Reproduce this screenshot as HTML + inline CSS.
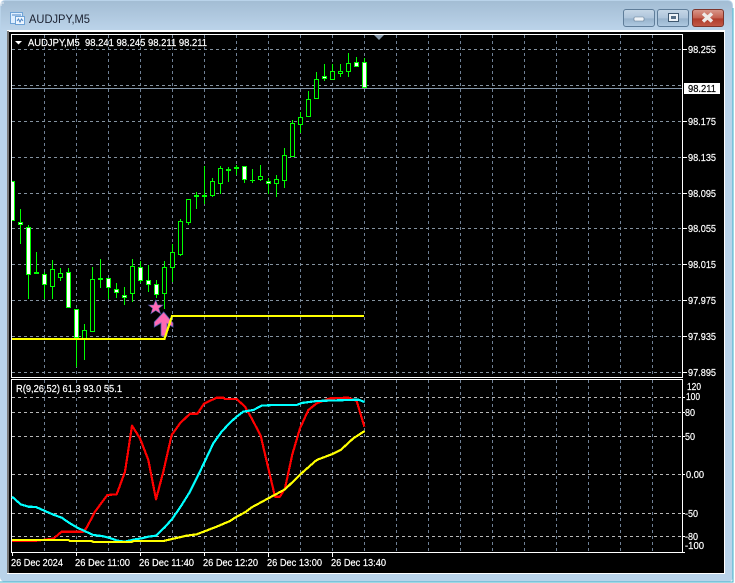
<!DOCTYPE html>
<html><head><meta charset="utf-8"><style>
html,body{margin:0;padding:0;width:735px;height:583px;overflow:hidden;background:#fff}
svg{display:block;position:absolute;left:0;top:0}
text{font-family:"Liberation Sans",sans-serif;font-size:10px;color:#fff;fill:currentColor;stroke:currentColor;stroke-width:.2}
.h rect{fill:#000;stroke:#0f0;stroke-width:1}
.w rect{fill:#fff;stroke:#0f0;stroke-width:1}
.wick{stroke:#0f0;stroke-width:1;fill:none}
.l{fill:none;stroke-width:6.600;stroke-linejoin:round;shape-rendering:crispEdges}
</style></head><body>
<svg width="735" height="583" viewBox="0 0 735 583" xmlns="http://www.w3.org/2000/svg">
<defs>
<linearGradient id="tb" x1="0" y1="0" x2="0" y2="1"><stop offset="0" stop-color="#a3bdd4"/><stop offset="1" stop-color="#bcd4ea"/></linearGradient>
<linearGradient id="b1" x1="0" y1="0" x2="0" y2="1"><stop offset="0" stop-color="#c6d7e7"/><stop offset=".5" stop-color="#aec5db"/><stop offset=".55" stop-color="#98b3cc"/><stop offset="1" stop-color="#b0cae2"/></linearGradient>
<linearGradient id="b2" x1="0" y1="0" x2="0" y2="1"><stop offset="0" stop-color="#d9998c"/><stop offset=".5" stop-color="#c4604f"/><stop offset=".55" stop-color="#b03c2b"/><stop offset="1" stop-color="#c25a48"/></linearGradient>
</defs>
<rect x="0" y="0" width="735" height="583" fill="#fff"/>
<rect x="0" y="0" width="733" height="582" rx="5" fill="#b9d3ea"/>
<rect x="1" y="1" width="731" height="30" rx="4" fill="url(#tb)"/>
<path d="M1 6V3H4" stroke="#e8eef4" fill="none"/>
<path d="M0 582H733V8" stroke="#3fb2c9" fill="none"/>
<rect x="7" y="30" width="718" height="544" fill="#fff"/>
<rect x="7" y="31" width="2" height="542" fill="#777"/>
<rect x="9" y="32" width="715" height="541" fill="#000"/>

<!-- title icon -->
<rect x="10.500" y="12.500" width="12" height="11" fill="#dfefff" stroke="#6fa3d6"/>
<rect x="15.500" y="16.500" width="9" height="8" fill="#eef6ff" stroke="#6fa3d6"/>
<path d="M12 15h9M17 21l1.500-2 1.500 3 1.500-3 1.500 2" stroke="#4f87c4" fill="none"/>
<text x="29" y="23" textLength="61" lengthAdjust="spacingAndGlyphs" style="font-size:11.500px;color:#1a2030;stroke-width:0">AUDJPY,M5</text>

<!-- buttons -->
<rect x="623.500" y="9.500" width="31" height="17" rx="2.500" fill="url(#b1)" stroke="#5f7d99"/>
<rect x="634" y="17" width="10" height="4" rx="1" fill="#eef3f8" stroke="#607a92" stroke-width=".6"/>
<rect x="657.500" y="9.500" width="31" height="17" rx="2.500" fill="url(#b1)" stroke="#5f7d99"/>
<rect x="668.500" y="13.500" width="10" height="8" fill="#eef3f8" stroke="#3f5870"/>
<rect x="671" y="16" width="5" height="3" fill="#566e86"/>
<rect x="692.500" y="9.500" width="31" height="17" rx="2.500" fill="url(#b2)" stroke="#7d352c"/>
<path d="M703 13.500l9 8M712 13.500l-9 8" stroke="#eeeae8" stroke-width="3.500"/>

<!-- grids -->
<g shape-rendering="crispEdges" stroke="#6f8095" stroke-dasharray="3 3" fill="none">
<path d="M44.500 35V377M76.500 35V377M108.500 35V377M140.500 35V377M172.500 35V377M204.500 35V377M236.500 35V377M268.500 35V377M300.500 35V377M332.500 35V377M364.500 35V377M396.500 35V377M428.500 35V377M460.500 35V377M492.500 35V377M524.500 35V377M556.500 35V377M588.500 35V377M620.500 35V377M652.500 35V377"/>
<path d="M44.500 380V552M76.500 380V552M108.500 380V552M140.500 380V552M172.500 380V552M204.500 380V552M236.500 380V552M268.500 380V552M300.500 380V552M332.500 380V552M364.500 380V552M396.500 380V552M428.500 380V552M460.500 380V552M492.500 380V552M524.500 380V552M556.500 380V552M588.500 380V552M620.500 380V552M652.500 380V552"/>
<path stroke="#84929f" d="M12 49.500H683M12 85.500H683M12 121.500H683M12 157.500H683M12 193.500H683M12 228.500H683M12 264.500H683M12 300.500H683M12 336.500H683M12 372.500H683"/>
<path stroke="#b8b8b8" d="M12 397.500H683M12 412.500H683M12 436.500H683M12 474.500H683M12 513.500H683M12 536.500H683"/>
</g>
<rect x="12" y="88" width="671" height="1" fill="#8496a8"/>

<!-- candles wicks -->
<path class="wick" shape-rendering="crispEdges" d="M20.500 209V244M28.500 225V299M36.500 252V274M44.500 272V299M52.500 260V299M60.500 268V281M68.500 268V308M76.500 309V367M84.500 324V360M92.500 267V332M100.500 259V288M108.500 278V299M116.500 283V298M124.500 287V305M132.500 259V302M140.500 261V283M148.500 265V292M156.500 280V298M164.500 261V309M172.500 244V282M180.500 219V256M188.500 199V225M196.500 192V209M204.500 166V204M212.500 178V197M220.500 166V194M228.500 167V182M236.500 165V175M244.500 166V183M252.500 169V183M260.500 165V181M268.500 178V194M276.500 175V197M284.500 148V188M292.500 120V157M300.500 112V133M308.500 91V117M316.500 72V99M324.500 64V81M332.500 64V80M340.500 64V77M348.500 53V77M356.500 57V67M364.500 58V88"/>
<g class="h" shape-rendering="crispEdges">
<rect x="50.500" y="269.500" width="4" height="17"/><rect x="58.500" y="273.500" width="4" height="4"/><rect x="82.500" y="330.500" width="4" height="9"/><rect x="90.500" y="279.500" width="4" height="52"/><rect x="130.500" y="266.500" width="4" height="27"/><rect x="162.500" y="267.500" width="4" height="26"/><rect x="170.500" y="252.500" width="4" height="15"/><rect x="178.500" y="221.500" width="4" height="33"/><rect x="186.500" y="199.500" width="4" height="23"/><rect x="210.500" y="181.500" width="4" height="14"/><rect x="218.500" y="168.500" width="4" height="15"/><rect x="258.500" y="176.500" width="4" height="3"/><rect x="274.500" y="179.500" width="4" height="4"/><rect x="282.500" y="155.500" width="4" height="25"/><rect x="290.500" y="123.500" width="4" height="33"/><rect x="298.500" y="117.500" width="4" height="7"/><rect x="306.500" y="99.500" width="4" height="17"/><rect x="314.500" y="79.500" width="4" height="19"/><rect x="330.500" y="71.500" width="4" height="8"/><rect x="338.500" y="71.500" width="4" height="2"/><rect x="346.500" y="63.500" width="4" height="8"/>
</g>
<g shape-rendering="crispEdges" fill="#0f0">
<rect x="34" y="272" width="5" height="2"/><rect x="98" y="278" width="5" height="2"/><rect x="194" y="195" width="5" height="2"/><rect x="202" y="195" width="5" height="2"/><rect x="226" y="169" width="5" height="2"/><rect x="234" y="167" width="5" height="2"/><rect x="250" y="180" width="5" height="1"/>
</g>
<g class="w" shape-rendering="crispEdges">
<rect x="11.500" y="181.500" width="3" height="39"/><rect x="18.500" y="222.500" width="4" height="2"/><rect x="26.500" y="227.500" width="4" height="47"/><rect x="42.500" y="274.500" width="4" height="10"/><rect x="66.500" y="272.500" width="4" height="35"/><rect x="74.500" y="309.500" width="4" height="28"/><rect x="106.500" y="278.500" width="4" height="9"/><rect x="114.500" y="289.500" width="4" height="3"/><rect x="122.500" y="295.500" width="4" height="2"/><rect x="138.500" y="267.500" width="4" height="13"/><rect x="146.500" y="280.500" width="4" height="4"/><rect x="154.500" y="284.500" width="4" height="10"/><rect x="242.500" y="166.500" width="4" height="13"/><rect x="266.500" y="181.500" width="4" height="2"/><rect x="322.500" y="76.500" width="4" height="2"/><rect x="354.500" y="62.500" width="4" height="4"/><rect x="362.500" y="62.500" width="4" height="25"/>
</g>

<!-- star + arrow -->
<path d="M155.700 300l2 5h5.300l-4.200 3.300 1.700 5.400-4.800-3.200-4.800 3.200 1.700-5.400-4.200-3.300h5.300z" fill="#ff69b4" stroke="#5560b0" stroke-width=".6"/>
<path d="M163.700 312L173 323v4l-6-3.500V336h-6V323l-6.700 4V322z" fill="#ff69b4" stroke="#5560b0" stroke-width=".8"/>

<!-- main yellow -->
<path d="M12 339H164.500L172 316H364" fill="none" stroke="#ff0" stroke-width="2.200" shape-rendering="crispEdges"/>

<!-- borders -->
<g fill="#fff" shape-rendering="crispEdges">
<rect x="11" y="34" width="672" height="1"/><rect x="11" y="34" width="1" height="344"/><rect x="682" y="34" width="1" height="344"/><rect x="11" y="377" width="672" height="1"/>
<rect x="11" y="379" width="672" height="1"/><rect x="11" y="379" width="1" height="174"/><rect x="682" y="379" width="1" height="174"/><rect x="11" y="552" width="672" height="1"/>
<path d="M683 49h4v1h-4zM683 121h4v1h-4zM683 157h4v1h-4zM683 193h4v1h-4zM683 228h4v1h-4zM683 264h4v1h-4zM683 300h4v1h-4zM683 336h4v1h-4zM683 372h4v1h-4zM683 397h2v1h-2zM683 412h2v1h-2zM683 436h2v1h-2zM683 474h2v1h-2zM683 513h2v1h-2zM683 536h2v1h-2zM683 552h2v1h-2z"/>
<path d="M12 553h1v3h-1zM76 553h1v3h-1zM140 553h1v3h-1zM204 553h1v3h-1zM268 553h1v4h-1zM332 553h1v4h-1z"/>
</g>
<path d="M374 35h10l-5 5z" fill="#8496a8"/>
<path d="M15 41h7l-3.500 3.500z" fill="#fff"/>

<!-- indicators -->
<g transform="translate(0 375) scale(.33333)">
<polyline class="l" stroke="#f00" points="36,497 110,497 160,491 185,470 250,470 260,458 285,410 322,360 350,358 375,290 396,152 420,190 445,255 468,373 490,290 515,180 540,145 570,116 592,116 612,86 650,68 670,68 675,72 710,72 735,95 755,130 782,182 825,365 840,365 855,340 877,238 900,160 925,105 950,85 990,70 1045,68 1070,78 1093,155"/>
<polyline class="l" stroke="#0ff" points="36,365 62,388 85,395 108,396 135,408 160,419 185,428 210,445 232,458 258,470 280,480 305,483 330,489 352,497 375,500 400,494 425,490 445,485 468,482 495,456 518,430 545,390 570,350 590,310 615,258 640,205 665,170 690,143 710,125 730,110 760,105 785,92 820,90 890,90 905,84 950,78 1045,75 1075,74 1094,81"/>
<polyline class="l" stroke="#ff0" points="36,495 205,495 210,498 275,498 280,501 395,501 400,498 490,498 525,490 560,482 590,478 650,455 690,438 710,425 735,412 755,397 805,370 855,343 910,290 950,255 995,238 1022,225 1060,190 1094,168"/>
</g>

<!-- texts -->
<g>
<text x="28" y="46" textLength="179" lengthAdjust="spacingAndGlyphs" xml:space="preserve">AUDJPY,M5  98.241 98.245 98.211 98.211</text>
<text x="16" y="392" textLength="106" lengthAdjust="spacingAndGlyphs">R(9,26,52) 61.3 93.0 55.1</text>
<text x="688" y="53" textLength="28" lengthAdjust="spacingAndGlyphs">98.255</text>
<rect x="684" y="83" width="36" height="11" fill="#fff"/>
<text x="688" y="92" textLength="28" lengthAdjust="spacingAndGlyphs" style="color:#000">98.211</text>
<text x="688" y="125" textLength="28" lengthAdjust="spacingAndGlyphs">98.175</text>
<text x="688" y="161" textLength="28" lengthAdjust="spacingAndGlyphs">98.135</text>
<text x="688" y="197" textLength="28" lengthAdjust="spacingAndGlyphs">98.095</text>
<text x="688" y="232" textLength="28" lengthAdjust="spacingAndGlyphs">98.055</text>
<text x="688" y="268" textLength="28" lengthAdjust="spacingAndGlyphs">98.015</text>
<text x="688" y="304" textLength="28" lengthAdjust="spacingAndGlyphs">97.975</text>
<text x="688" y="340" textLength="28" lengthAdjust="spacingAndGlyphs">97.935</text>
<text x="688" y="376" textLength="28" lengthAdjust="spacingAndGlyphs">97.895</text>
<text x="687" y="390" textLength="14" lengthAdjust="spacingAndGlyphs">120</text>
<text x="686" y="400" textLength="14" lengthAdjust="spacingAndGlyphs">100</text>
<text x="685" y="416" textLength="10" lengthAdjust="spacingAndGlyphs">80</text>
<text x="685" y="440" textLength="10" lengthAdjust="spacingAndGlyphs">50</text>
<text x="686" y="478" textLength="18" lengthAdjust="spacingAndGlyphs">0.00</text>
<text x="685" y="517" textLength="13" lengthAdjust="spacingAndGlyphs">-50</text>
<text x="685" y="540" textLength="13" lengthAdjust="spacingAndGlyphs">-80</text>
<text x="685" y="549" textLength="19" lengthAdjust="spacingAndGlyphs">-100</text>
<text x="11" y="566" textLength="52" lengthAdjust="spacingAndGlyphs">26 Dec 2024</text>
<text x="75" y="566" textLength="55" lengthAdjust="spacingAndGlyphs">26 Dec 11:00</text>
<text x="139" y="566" textLength="55" lengthAdjust="spacingAndGlyphs">26 Dec 11:40</text>
<text x="203" y="566" textLength="55" lengthAdjust="spacingAndGlyphs">26 Dec 12:20</text>
<text x="267" y="566" textLength="55" lengthAdjust="spacingAndGlyphs">26 Dec 13:00</text>
<text x="331" y="566" textLength="55" lengthAdjust="spacingAndGlyphs">26 Dec 13:40</text>
</g>
</svg>
</body></html>
